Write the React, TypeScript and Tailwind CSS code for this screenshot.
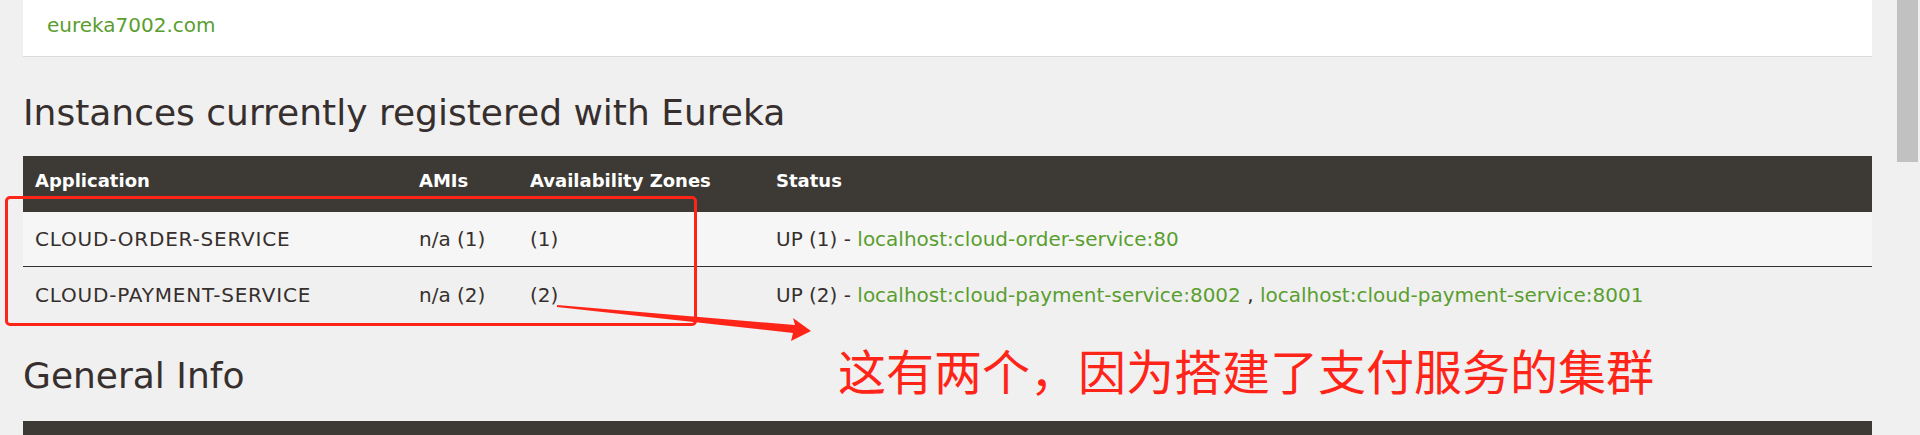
import React from "react";

const rows = [
  {
    app: "CLOUD-ORDER-SERVICE",
    amis: "n/a (1)",
    zones: "(1)",
    up: "UP (1) - ",
    links: ["localhost:cloud-order-service:80"],
    bg: "bg-[#f6f6f6]",
  },
  {
    app: "CLOUD-PAYMENT-SERVICE",
    amis: "n/a (2)",
    zones: "(2)",
    up: "UP (2) - ",
    links: ["localhost:cloud-payment-service:8002", "localhost:cloud-payment-service:8001"],
    bg: "bg-[#f0f0f0]",
  },
];

const cols = "grid grid-cols-[384px_111px_246px_1fr]";

const App: React.FC = () => {
  return (
    <div
      className="relative h-[435px] w-full overflow-hidden bg-[#f0f0f0] text-[#362f2d]"
      style={{ fontFamily: "'DejaVu Sans', 'Noto Sans CJK SC', sans-serif" }}
    >
      <div className="pl-[23px] pr-[48px]">
        {/* Replicas panel */}
        <div className="flex h-[57px] items-center border-b border-[#dcdcdc] bg-white pl-[24px] pb-[6px]">
          <a href="#" className="text-[20px] text-[#5a9e2f]">
            eureka7002.com
          </a>
        </div>

        {/* Instances */}
        <h2 className="mt-[39px] h-[33px] text-[36px] leading-[33px]">
          Instances currently registered with Eureka
        </h2>

        <div className="mt-[27px]">
          <div className={`${cols} h-[56px] items-center bg-[#3d3a35] text-[18px] font-bold text-white`}>
            <div className="px-[12px] pb-[8px]">Application</div>
            <div className="px-[12px] pb-[8px]">AMIs</div>
            <div className="px-[12px] pb-[8px]">Availability Zones</div>
            <div className="px-[12px] pb-[8px]">Status</div>
          </div>
          {rows.map((r, i) => (
            <div
              key={r.app}
              className={`${cols} h-[55px] items-center text-[20px] ${r.bg} ${i === 0 ? "border-b border-[#333]" : ""}`}
            >
              <div className="px-[12px] tracking-[0.8px]">{r.app}</div>
              <div className="px-[12px]">{r.amis}</div>
              <div className="px-[12px]">{r.zones}</div>
              <div className="px-[12px] whitespace-nowrap">
                {r.up}
                {r.links.map((l, j) => (
                  <React.Fragment key={l}>
                    {j > 0 && " , "}
                    <a href="#" className="text-[#5a9e2f]">
                      {l}
                    </a>
                  </React.Fragment>
                ))}
              </div>
            </div>
          ))}
        </div>

        {/* General Info */}
        <h2 className="mt-[37px] h-[33px] text-[36px] leading-[33px]">General Info</h2>
        <div className="mt-[29px] h-[40px] bg-[#3d3a35]" />
      </div>

      {/* scrollbar thumb */}
      <div className="absolute right-[2px] top-0 h-[162px] w-[21px] bg-[#c1c1c1]" />

      {/* annotation */}
      <div className="absolute left-[5px] top-[196px] h-[130px] w-[692px] rounded-[5px] border-[3px] border-[#ff2418]" />
      <svg className="absolute left-0 top-0" width="1920" height="435" viewBox="0 0 1920 435">
        <polygon points="557,305 795,325 793,318 811,331 791,341 793,333 557,307" fill="#ff2418" />
      </svg>
      <div
        className="absolute left-[838px] top-[344px] text-[48px] leading-[50px] text-[#ff2418]"
        style={{ fontFamily: "'Noto Sans CJK SC', sans-serif" }}
      >
        这有两个，因为搭建了支付服务的集群
      </div>
    </div>
  );
};

export default App;
